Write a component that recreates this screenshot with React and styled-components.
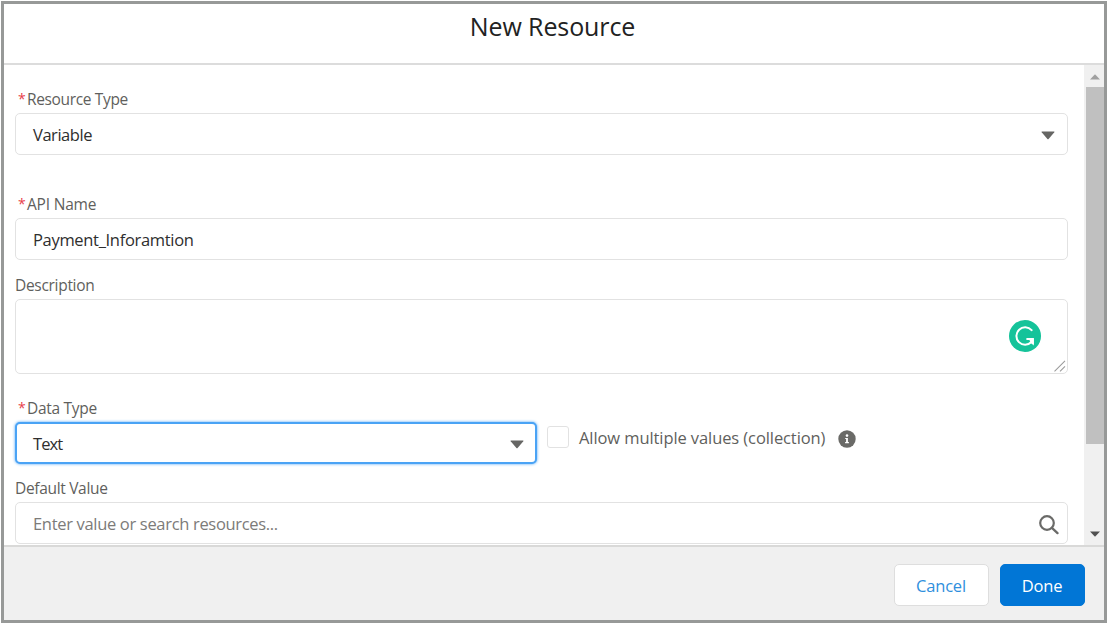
import React from 'react';
import styled, { createGlobalStyle } from 'styled-components';

const GlobalStyle = createGlobalStyle`
  * { box-sizing: border-box; }
  body { margin: 0; background: #fff; font-family: 'Open Sans', 'Noto Sans', sans-serif; }
`;

const Page = styled.div`
  width: 1108px;
  height: 624px;
  padding: 1px;
  overflow: hidden;
`;

const Modal = styled.section`
  display: flex;
  flex-direction: column;
  width: 1106px;
  height: 622px;
  border: 3px solid #979998;
  background: #fff;
`;

const Header = styled.header`
  height: 61px;
  flex: none;
  padding-top: 4px;
  border-bottom: 2px solid #dcdcdc;
  text-align: center;
`;

const Title = styled.h1`
  margin: 0 3px 0 0;
  font-size: 25px;
  line-height: 36px;
  font-weight: 400;
  letter-spacing: ${(p) => p.$spacing}px;
  color: #222;
`;

const Body = styled.div`
  display: flex;
  height: 480px;
  flex: none;
  overflow: hidden;
`;

const Form = styled.form`
  flex: 1;
  padding: 20px 16px 0 11px;
`;

const Field = styled.div`
  width: ${(p) => p.$width || '100%'};
  margin-bottom: ${(p) => p.$gap || 0}px;
`;

const Label = styled.label`
  display: flex;
  height: 28px;
  line-height: 28px;
  font-size: 15.5px;
  white-space: nowrap;
  letter-spacing: ${(p) => p.$spacing || 0}px;
  color: #5f5f5d;
`;

const Required = styled.abbr`
  width: 12px;
  padding-left: 3px;
  font-size: 14px;
  line-height: 27px;
  letter-spacing: 0;
  color: #e8404a;
`;

const Control = styled.div`
  position: relative;
  display: flex;
  align-items: center;
  justify-content: space-between;
  height: ${(p) => p.$height || 42}px;
  padding: 1px 12px 0 17px;
  border: ${(p) => (p.$focused ? '2px solid #4aa3f5' : '1px solid #e2e2e2')};
  ${(p) => p.$focused && 'padding: 1px 11px 0 16px; box-shadow: 0 0 3px #4aa3f5;'}
  border-radius: 5px;
  background: #fff;
`;

const Value = styled.span`
  font-size: 16.5px;
  line-height: 24px;
  padding-top: 1px;
  white-space: nowrap;
  letter-spacing: ${(p) => p.$spacing || 0}px;
  color: ${(p) => (p.$placeholder ? '#7c7b79' : '#2e2e2e')};
`;

const CaretSlot = styled.span`
  display: flex;
  padding-top: 1px;
`;

const Split = styled.div`
  display: flex;
  margin-bottom: 10px;
`;

const CheckRow = styled.div`
  display: flex;
  align-items: center;
  height: 24px;
  margin: 31px 0 0 10px;
`;

const Checkbox = styled.span`
  width: 22px;
  height: 22px;
  margin-right: 10px;
  border: 1px solid #e2e2e2;
  border-radius: 3px;
`;

const CheckText = styled.span`
  width: 259px;
  font-size: 16.5px;
  line-height: 24px;
  padding-top: 1px;
  white-space: nowrap;
  letter-spacing: ${(p) => p.$spacing}px;
  color: #5f5f5d;
`;

const InfoSlot = styled.span`
  display: flex;
  padding-top: 3px;
`;

const Badge = styled.span`
  position: absolute;
  top: 20px;
  right: 26px;
  display: flex;
`;

const Grip = styled.span`
  position: absolute;
  right: 1px;
  bottom: 1px;
  display: flex;
`;

const Scrollbar = styled.div`
  display: flex;
  flex-direction: column;
  align-items: flex-end;
  width: 20px;
  background: #f0f0f0;
`;

const ArrowSlot = styled.div`
  display: flex;
  align-items: center;
  justify-content: center;
  width: 18px;
  height: 22px;
  padding-top: ${(p) => p.$drop || 0}px;
`;

const Thumb = styled.div`
  width: 18px;
  height: 357px;
  margin-bottom: 79px;
  background: #c0c0c0;
`;

const Footer = styled.footer`
  display: flex;
  flex: 1;
  justify-content: flex-end;
  gap: 11px;
  padding: 17px 19px 0 0;
  border-top: 2px solid #d9d9d8;
  background: #f0f0f0;
`;

const Button = styled.button`
  width: ${(p) => p.$width}px;
  height: 42px;
  padding: 1px 1px 0 0;
  border: 1px solid ${(p) => (p.$primary ? '#0176d6' : '#dedede')};
  border-radius: 5px;
  background: ${(p) => (p.$primary ? '#0176d6' : '#fff')};
  color: ${(p) => (p.$primary ? '#fff' : '#2f8fdd')};
  font: 400 16.5px/24px 'Open Sans', 'Noto Sans', sans-serif;
  letter-spacing: ${(p) => p.$spacing || 0}px;
`;

const Caret = () => (
  <CaretSlot>
    <svg width="14" height="9" viewBox="0 0 14 9">
      <path d="M1 0.5h12q0.8 0 0.3 0.7L7.6 8q-0.6 0.7-1.2 0L0.7 1.2Q0.2 0.5 1 0.5z" fill="#666664" />
    </svg>
  </CaretSlot>
);

const ScrollArrow = ({ down }) => (
  <svg width="10" height="6" viewBox="0 0 10 6">
    <path d={down ? 'M0 0.5h10L5 5.8z' : 'M0 5.5h10L5 0.2z'} fill={down ? '#505050' : '#a0a0a0'} />
  </svg>
);

const InfoIcon = () => (
  <svg width="18" height="18" viewBox="0 0 18 18">
    <circle cx="9" cy="9" r="8.7" fill="#6a6a67" />
    <circle cx="9" cy="5.6" r="1.3" fill="#fff" />
    <path d="M7.2 8h2.7v4.1h1v1.2H7.1v-1.2h1V9.1H7.2z" fill="#fff" />
  </svg>
);

const WritingBadge = () => (
  <svg width="32" height="32" viewBox="0 0 32 32">
    <circle cx="16" cy="16" r="16" fill="#15c39a" />
    <path d="M22.6 10.2A8.7 8.7 0 1 0 22.4 22" fill="none" stroke="#fff" strokeWidth="2" strokeLinecap="round" />
    <path d="M17.4 18.9h6.4v5" fill="none" stroke="#fff" strokeWidth="2" />
    <path d="M24.8 18v7.5l-2.4-2.1-2-2.9z" fill="#fff" />
  </svg>
);

const GripIcon = () => (
  <svg width="12" height="12" viewBox="0 0 12 12">
    <path d="M0.5 11.3L11 0.8M6 11.3L11 6.3" stroke="#9c9c9c" strokeWidth="1.1" />
  </svg>
);

const SearchIcon = () => (
  <svg width="20" height="20" viewBox="0 0 20 20">
    <circle cx="8" cy="8" r="6.8" fill="none" stroke="#6a6a68" strokeWidth="2.2" />
    <path d="M12.9 12.9l5.6 5.2" stroke="#6a6a68" strokeWidth="2.3" strokeLinecap="round" />
  </svg>
);

const SearchSlot = styled.span`
  display: flex;
  margin: 3px -4px 0 0;
`;

export default function App() {
  return (
    <Page>
      <GlobalStyle />
      <Modal>
        <Header>
          <Title $spacing={-0.1}>New Resource</Title>
        </Header>
        <Body>
          <Form>
            <Field $gap={35}>
              <Label $spacing={-0.35}><Required>*</Required>Resource Type</Label>
              <Control><Value $spacing={-0.45}>Variable</Value><Caret /></Control>
            </Field>
            <Field $gap={11}>
              <Label $spacing={-0.2}><Required>*</Required>API Name</Label>
              <Control><Value $spacing={-0.32}>Payment_Inforamtion</Value></Control>
            </Field>
            <Field $gap={20}>
              <Label $spacing={-0.3}>Description</Label>
              <Control $height={75}>
                <Badge><WritingBadge /></Badge>
                <Grip><GripIcon /></Grip>
              </Control>
            </Field>
            <Split>
              <Field $width="522px">
                <Label $spacing={-0.3}><Required>*</Required>Data Type</Label>
                <Control $focused><Value $spacing={-0.9}>Text</Value><Caret /></Control>
              </Field>
              <CheckRow>
                <Checkbox />
                <CheckText $spacing={-0.09}>Allow multiple values (collection)</CheckText>
                <InfoSlot><InfoIcon /></InfoSlot>
              </CheckRow>
            </Split>
            <Field>
              <Label $spacing={-0.32}>Default Value</Label>
              <Control>
                <Value $placeholder $spacing={-0.32}>Enter value or search resources...</Value>
                <SearchSlot><SearchIcon /></SearchSlot>
              </Control>
            </Field>
          </Form>
          <Scrollbar>
            <ArrowSlot $drop={2}><ScrollArrow /></ArrowSlot>
            <Thumb />
            <ArrowSlot><ScrollArrow down /></ArrowSlot>
          </Scrollbar>
        </Body>
        <Footer>
          <Button $width={95} $spacing={-0.2}>Cancel</Button>
          <Button $width={85} $spacing={-0.2} $primary>Done</Button>
        </Footer>
      </Modal>
    </Page>
  );
}
